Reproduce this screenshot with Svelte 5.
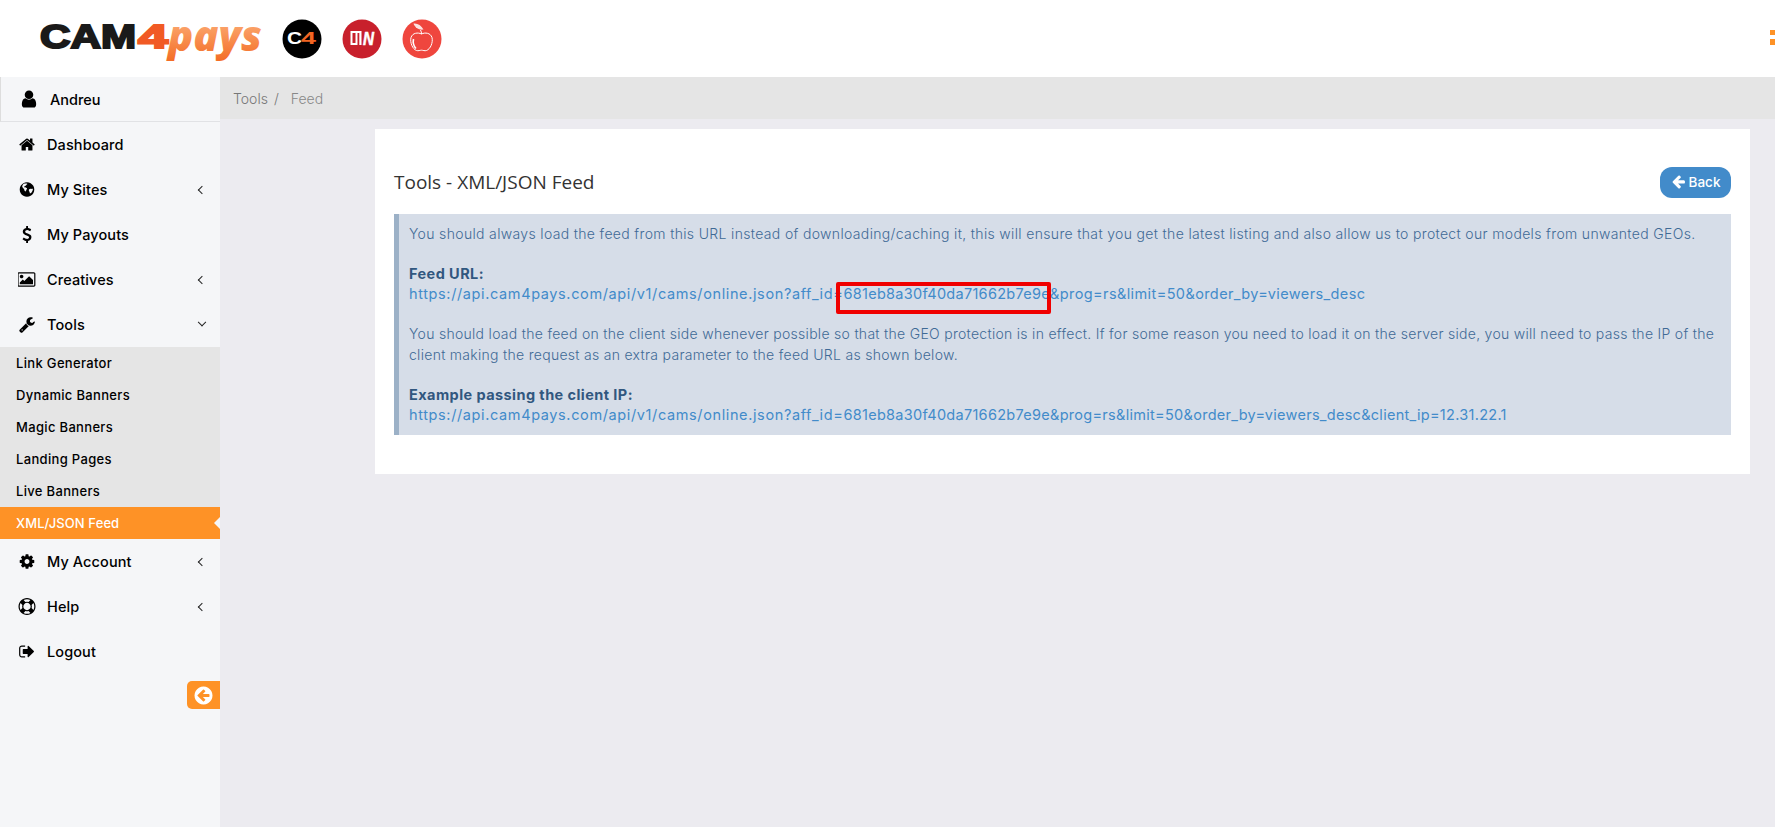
<script>
  const sub = ["Link Generator", "Dynamic Banners", "Magic Banners", "Landing Pages", "Live Banners"];
</script>

<div class="page">
  <header class="top">
    <svg class="logo" viewBox="0 0 223 48" width="223" height="48" aria-label="CAM4Pays">
      <defs>
        <linearGradient id="pg" x1="0" y1="0" x2="0" y2="1"><stop offset="0" stop-color="#ffc08e"/><stop offset="1" stop-color="#f36a22"/></linearGradient>
      </defs>
      <text x="0" y="33.500" class="cam" textLength="96" lengthAdjust="spacingAndGlyphs">CAM</text>
      <text x="98" y="33.500" class="four" textLength="30" lengthAdjust="spacingAndGlyphs">4</text>
      <text x="128" y="37" class="pays" fill="url(#pg)" textLength="94" lengthAdjust="spacingAndGlyphs">pays</text>
    </svg>
    <svg class="site" viewBox="0 0 40 40" width="40" height="40"><circle cx="20" cy="20" r="19.500" fill="#000"/><text x="5" y="25" class="c4" fill="#fff" textLength="15" lengthAdjust="spacingAndGlyphs">C</text><text x="19" y="25" class="c4" fill="#f26522" textLength="15" lengthAdjust="spacingAndGlyphs">4</text></svg>
    <svg class="site" viewBox="0 0 40 40" width="40" height="40"><circle cx="20" cy="20" r="19.500" fill="#c8202c"/><rect x="8.500" y="12" width="11" height="14" fill="#fff"/><rect x="10.500" y="14" width="3" height="10" fill="#c8202c"/><rect x="15.500" y="14" width="1.800" height="12" fill="#c8202c"/><text x="21" y="26" class="on" textLength="11" lengthAdjust="spacingAndGlyphs">N</text></svg>
    <svg class="site" viewBox="0 0 40 40" width="40" height="40"><circle cx="20" cy="20" r="19.500" fill="#ef463e"/><path d="M19.500 15c-3.500-1.800-9-1.200-10.500 3.500-1.200 5 1.500 11.500 5.500 13 1.800.6 3.500-.3 5-.3s3.200.9 5 .3c4-1.500 6.700-8 5.500-13-1.500-4.700-7-5.300-10.500-3.500z" fill="none" stroke="#fff" stroke-width="1"/><path d="M11.500 20c-.8 4 .5 7.500 2.500 9.500" fill="none" stroke="#fff" stroke-width="1.600"/><path d="M19.500 15c0-1.500-.2-2.500-1-4" fill="none" stroke="#fff" stroke-width="1"/><path d="M11.500 4.500c4-.5 7.500 1.500 10 6-4 .8-8.500-1.500-10-6z" fill="#fff" opacity=".85"/></svg>
    <span class="menu-dot"></span>
  </header>

  <div class="body">
    <aside class="side">
      <div class="user">
        <svg viewBox="0 0 1792 1792" width="20" height="20"><path d="M1536 1399q0 109-62.500 187t-150.500 78h-854q-88 0-150.500-78t-62.500-187q0-85 8.500-160.500t31.500-152 58.500-131 94-89 134.500-34.500q131 128 313 128t313-128q76 0 134.500 34.500t94 89 58.500 131 31.500 152 8.500 160.500zm-256-887q0 159-112.500 271.500t-271.500 112.500-271.500-112.500-112.500-271.500 112.500-271.500 271.500-112.500 271.500 112.500 112.500 271.500z"/></svg>
        <span>Andreu</span>
      </div>
      <nav>
        <a class="item" href="#a"><svg viewBox="0 0 1792 1792"><path d="M1472 992v480q0 26-19 45t-45 19h-384v-384h-256v384h-384q-26 0-45-19t-19-45v-480q0-1 .5-3t.5-3l575-474 575 474q1 2 1 6zm223-69l-62 74q-8 9-21 11h-3q-13 0-21-7l-692-577-692 577q-12 8-24 7-13-2-21-11l-62-74q-8-10-7-23.500t11-21.500l719-599q32-26 76-26t76 26l244 204v-195q0-14 9-23t23-9h192q14 0 23 9t9 23v408l219 182q10 8 11 21.500t-7 23.500z"/></svg><span>Dashboard</span></a>
        <a class="item" href="#a"><svg viewBox="0 0 1792 1792"><path fill-rule="evenodd" d="M896 128a768 768 0 1 0 .1 0zM560 290c120-40 250-50 340-20 40 40 10 90-30 110-50 30-40 80-90 90-40 10-50 70-110 70-60 10-70 60-40 110 40 50 110 10 170 50 50 30 90 40 100 90 10 60-70 110-80 180-10 60-60 70-80 130-80-20-120-110-130-190-10-70-90-90-120-160-30-60-80-90-100-150 20-130 70-230 170-310zM1130 860c60-30 130-60 200-30 60 20 110 10 190 0 0 150-60 290-170 400-50 40-90 80-130 70-50-20-20-90-50-150-20-50-70-80-80-150 0-60 0-110 40-140z"/></svg><span>My Sites</span><i class="chev"></i></a>
        <a class="item" href="#a"><svg viewBox="0 0 1792 1792"><path d="M1362 1185q0 153-99.500 263.500t-258.500 136.500v175q0 14-9 23t-23 9h-135q-13 0-22.500-9.500t-9.500-22.500v-175q-66-9-127.500-31t-101.500-44.500-74-48-46.500-37.500-17.500-18q-17-21-2-41l103-135q7-10 23-12 15-2 24 9l2 2q113 99 243 125 37 8 74 8 81 0 142.500-43t61.500-122q0-28-15-53t-33.500-42-58.500-37.500-66-32-80-32.500q-39-16-61.500-25t-61.500-26.500-62.500-31-56.500-35.500-53.500-42.500-43.500-49-35.500-58-21-66.500-8.500-78q0-138 98-242t255-134v-180q0-13 9.500-22.500t22.500-9.500h135q14 0 23 9t9 23v176q57 6 110.500 23t87 33.500 63.500 37.500 39 29 15 14q17 18 5 38l-81 146q-8 15-23 16-14 3-27-7-3-3-14.500-12t-39-26.500-58.500-32-74.500-26-85.500-11.500q-95 0-155 43t-60 111q0 26 8.500 48t29.500 41.500 39.500 33 56 31 60.500 27 70 27.500q53 20 81 31.500t76 35 75.500 42.500 62 50 53 63.500 31.500 76.500 13 94z"/></svg><span>My Payouts</span></a>
        <a class="item" href="#a"><svg viewBox="0 0 1920 1792"><path d="M576 576q0 80-56 136t-136 56-136-56-56-136 56-136 136-56 136 56 56 136zm1024 384v448h-1408v-192l320-320 160 160 512-512zm96-704h-1600q-13 0-22.500 9.500t-9.500 22.500v1216q0 13 9.500 22.500t22.500 9.500h1600q13 0 22.500-9.500t9.500-22.500v-1216q0-13-9.500-22.500t-22.500-9.500zm160 32v1216q0 66-47 113t-113 47h-1600q-66 0-113-47t-47-113v-1216q0-66 47-113t113-47h1600q66 0 113 47t47 113z"/></svg><span>Creatives</span><i class="chev"></i></a>
        <a class="item" href="#a"><svg viewBox="0 0 1792 1792"><path d="M448 1472q0-26-19-45t-45-19-45 19-19 45 19 45 45 19 45-19 19-45zm644-420l-682 682q-37 37-90 37-52 0-91-37l-106-108q-38-36-38-90 0-53 38-91l681-681q39 98 114.500 173.500t173.500 114.500zm634-435q0 39-23 106-47 134-164.500 217.500t-258.500 83.500q-185 0-316.500-131.500t-131.500-316.500 131.500-316.500 316.500-131.500q58 0 121.500 16.500t107.500 46.500q16 11 16 28t-16 28l-293 169v224l193 107q5-3 79-48.500t135.500-81 70.500-35.500q15 0 23.500 10t8.500 25z"/></svg><span>Tools</span><i class="chev down"></i></a>

        <div class="sub">
          {#each sub as s}<a href="#a">{s}</a>{/each}
          <a href="#a" class="active">XML/JSON Feed</a>
        </div>

        <a class="item" href="#a"><svg viewBox="0 0 1792 1792"><path d="M1152 896q0-106-75-181t-181-75-181 75-75 181 75 181 181 75 181-75 75-181zm512-109v222q0 12-8 23t-20 13l-185 28q-19 54-39 91 35 50 107 138 10 12 10 25t-9 23q-27 37-99 108t-94 71q-12 0-26-9l-138-108q-44 23-91 38-16 136-29 186-7 28-36 28h-222q-14 0-24.500-8.500t-11.500-21.500l-28-184q-49-16-90-37l-141 107q-10 9-25 9-14 0-25-11-126-114-165-168-7-10-7-23 0-12 8-23 15-21 51-66.500t54-70.500q-27-50-41-99l-183-27q-13-2-21-12.500t-8-23.500v-222q0-12 8-23t19-13l186-28q14-46 39-92-40-57-107-138-10-12-10-24 0-10 9-23 26-36 98.500-107.500t94.500-71.500q13 0 26 10l138 107q44-23 91-38 16-136 29-186 7-28 36-28h222q14 0 24.500 8.500t11.500 21.500l28 184q49 16 90 37l142-107q9-9 24-9 13 0 25 10 129 119 165 170 7 8 7 22 0 12-8 23-15 21-51 66.500t-54 70.500q26 50 41 98l183 28q13 2 21 12.500t8 23.500z"/></svg><span>My Account</span><i class="chev"></i></a>
        <a class="item" href="#a"><svg viewBox="0 0 1792 1792"><path d="M896 0q182 0 348 71t286 191 191 286 71 348-71 348-191 286-286 191-348 71-348-71-286-191-191-286-71-348 71-348 191-286 286-191 348-71zm0 128q-190 0-361 90l194 194q82-28 167-28t167 28l194-194q-171-90-361-90zm-678 1129l194-194q-28-82-28-167t28-167l-194-194q-90 171-90 361t90 361zm678 407q190 0 361-90l-194-194q-82 28-167 28t-167-28l-194 194q171 90 361 90zm0-384q159 0 271.500-112.500t112.500-271.500-112.500-271.500-271.500-112.500-271.500 112.500-112.500 271.500 112.500 271.500 271.500 112.500zm484-217l194 194q90-171 90-361t-90-361l-194 194q28 82 28 167t-28 167z"/></svg><span>Help</span><i class="chev"></i></a>
        <a class="item" href="#a"><svg viewBox="0 0 1792 1792"><path d="M704 1440q0 4 1 20t.5 26.500-3 23.500-10 19.500-20.500 6.500h-320q-119 0-203.500-84.500t-84.500-203.500v-704q0-119 84.500-203.500t203.500-84.500h320q13 0 22.500 9.500t9.500 22.500q0 4 1 20t.5 26.500-3 23.500-10 19.500-20.500 6.500h-320q-66 0-113 47t-47 113v704q0 66 47 113t113 47h312l11.500 1 11.500 3 8 5.500 7 9 2 13.500zm928-544q0 26-19 45l-544 544q-19 19-45 19t-45-19-19-45v-288h-448q-26 0-45-19t-19-45v-384q0-26 19-45t45-19h448v-288q0-26 19-45t45-19 45 19l544 544q19 19 19 45z"/></svg><span>Logout</span></a>
      </nav>
      <div class="collapse">
        <button aria-label="Collapse"><svg viewBox="0 0 1792 1792" width="21" height="21"><path fill="#fff" d="M1408 960v-128q0-26-19-45t-45-19h-502l189-189q19-19 19-45t-19-45l-91-91q-18-18-45-18t-45 18l-362 362-91 91q-18 18-18 45t18 45l91 91 362 362q18 18 45 18t45-18l91-91q18-18 18-45t-18-45l-189-189h502q26 0 45-19t19-45zm256-64q0 209-103 385.500t-279.500 279.500-385.500 103-385.500-103-279.500-279.500-103-385.500 103-385.500 279.500-279.500 385.500-103 385.500 103 279.500 279.500 103 385.500z"/></svg></button>
      </div>
    </aside>

    <main class="main">
      <div class="crumbs"><span>Tools</span><span class="sep">/</span><span class="cur">Feed</span></div>
      <section class="card">
        <div class="head">
          <h1>Tools - XML/JSON Feed</h1>
          <a class="back" href="#a"><svg viewBox="0 0 1792 1792" width="15" height="15"><path fill="#fff" d="M1664 896v128q0 53-32.500 90.500t-84.500 37.500h-704l293 294q38 36 38 90t-38 90l-75 76q-37 37-90 37-52 0-91-37l-651-652q-37-37-37-90 0-52 37-91l651-650q38-38 91-38 52 0 90 38l75 74q38 38 38 91t-38 91l-293 293h704q52 0 84.500 37.500t32.500 90.500z" transform="translate(0 -128)"/></svg>Back</a>
        </div>
        <div class="note">
          <p>You should always load the feed from this URL instead of downloading/caching it, this will ensure that you get the latest listing and also allow us to protect our models from unwanted GEOs.</p>
          <p><b>Feed URL:</b><br><a href="#a" class="url"><span class="pre">https://api.cam4pays.com/api/v1/cams/online.json?aff_id=</span><span class="id">681eb8a30f40da71662b7e9e</span><span class="suf">&amp;prog=rs&amp;limit=50&amp;order_by=viewers_desc</span></a></p>
          <p class="tight">You should load the feed on the client side whenever possible so that the GEO protection is in effect. If for some reason you need to load it on the server side, you will need to pass the IP of the client making the request as an extra parameter to the feed URL as shown below.</p>
          <p><b>Example passing the client IP:</b><br><a href="#a" class="url"><span class="pre">https://api.cam4pays.com/api/v1/cams/online.json?aff_id=</span><span class="id">681eb8a30f40da71662b7e9e&amp;prog=rs&amp;limit=50&amp;order_by=viewers_desc&amp;client_ip=12.31.22.1</span></a></p>
        </div>
        <span class="redbox"></span>
      </section>
    </main>
  </div>
</div>

<style>
  :global(body) { margin: 0; background: #ecebf0; font-family: "Inter", "Liberation Sans", sans-serif; }
  .page { width: 1775px; height: 827px; display: flex; flex-direction: column; overflow: hidden; }
  .top { height: 77px; background: #fff; display: flex; align-items: center; padding-left: 40px; position: relative; flex: none; }
  .logo { margin-right: 19px; margin-top: -2px; overflow: visible; flex: none; }
  .cam { font: 700 33.500px "Liberation Sans", sans-serif; fill: #1a1a1a; stroke: #1a1a1a; stroke-width: 2px; }
  .four { font: 700 33.500px "Liberation Sans", sans-serif; fill: #f15a24; stroke: #f15a24; stroke-width: 2px; }
  .pays { font: italic 800 42px "Open Sans", sans-serif; }
  .site { margin-right: 20px; flex: none; }
  .c4 { font: 700 17px "Liberation Sans", sans-serif; }
  .on { font: italic 700 19px "Liberation Sans", sans-serif; fill: #fff; stroke: #fff; stroke-width: .6px; }
  .menu-dot { position: absolute; right: 0; top: 30px; width: 5px; height: 15px; background: linear-gradient(#fe9226 0 5px, transparent 5px 9px, #fe9226 9px); }
  .body { flex: 1; display: flex; min-height: 0; }
  .side { width: 220px; flex: none; background: #f5f6f8; position: relative; }
  .user { height: 44px; display: flex; align-items: center; gap: 11px; padding-left: 18px; border-left: 1px solid #ddd; border-bottom: 1px solid #e1e2e5; font-size: 14.500px; font-weight: 500; color: #000; }
  .user svg { flex: none; }
  nav { display: flex; flex-direction: column; }
  .item { height: 45px; display: flex; align-items: center; padding-left: 18px; padding-right: 13px; color: #000; text-decoration: none; font-size: 14.500px; font-weight: 500; letter-spacing: .1px; }
  .item svg { width: 18px; height: 17px; margin-right: 11px; flex: none; }
  .item span { flex: 1; }
  .chev { width: 5px; height: 5px; border-left: 1px solid #222; border-bottom: 1px solid #222; transform: rotate(45deg); margin-right: 2px; }
  .chev.down { transform: rotate(-45deg) translate(2px, -2px); }
  .sub { background: #e5e5e5; display: flex; flex-direction: column; }
  .sub a { height: 32px; line-height: 32px; padding-left: 16px; font-size: 13px; font-weight: 500; letter-spacing: .33px; color: #000; text-decoration: none; }
  .sub a.active { background: #fe9226; color: #fff; position: relative; letter-spacing: .1px; }
  .sub a.active::after { content: ""; position: absolute; right: 0; top: 10px; border: 6px solid transparent; border-right-color: #f5f6f8; border-left: 0; }
  .collapse { display: flex; justify-content: flex-end; margin-top: 7px; }
  .collapse button { width: 33px; height: 28px; border: 0; padding: 0; background: #fe9226; border-radius: 5px 0 0 5px; display: flex; align-items: center; justify-content: center; }
  .main { flex: 1; min-width: 0; }
  .crumbs { height: 42px; background: #e5e5e5; display: flex; align-items: center; padding-left: 13px; font-size: 14px; color: #777; font-weight: 300; }
  .sep { margin: 0 12px 0 6px; }
  .cur { color: #888; }
  .card { margin: 10px 25px 0 155px; background: #fff; height: 345px; padding: 0 19px; box-sizing: border-box; position: relative; }
  .head { height: 85px; box-sizing: border-box; padding-top: 21px; display: flex; align-items: center; justify-content: space-between; }
  h1 { margin: 0; font: 400 19px "Open Sans", sans-serif; color: #333; }
  .back { width: 71px; height: 31px; background: #428bca; color: #fff; border-radius: 12px; display: flex; align-items: center; justify-content: center; gap: 3px; font-size: 13.500px; font-weight: 500; text-decoration: none; }
  .note { background: #d6dde8; border-left: 5px solid #9cb1c7; padding: 10px 10px; color: #3f6a96; font-size: 14px; letter-spacing: .34px; font-weight: 300; line-height: 20.100px; }
  .note p { margin: 0 0 20.100px; }
  .note p:last-child { margin: 0; }
  .note p.tight { letter-spacing: .29px; margin-right: -8px; }
  .note b { font-weight: 700; color: #31577f; font-size: 14.500px; letter-spacing: .43px; }
  .url { color: #428bca; text-decoration: none; font-weight: 400; font-size: 14.500px; }
  .pre { letter-spacing: .62px; }
  .id { letter-spacing: .29px; }
  .suf { letter-spacing: .4px; }
  .redbox { position: absolute; left: 461px; top: 153px; width: 215px; height: 32px; box-sizing: border-box; border: 4px solid #f00000; border-radius: 2px; }
</style>
